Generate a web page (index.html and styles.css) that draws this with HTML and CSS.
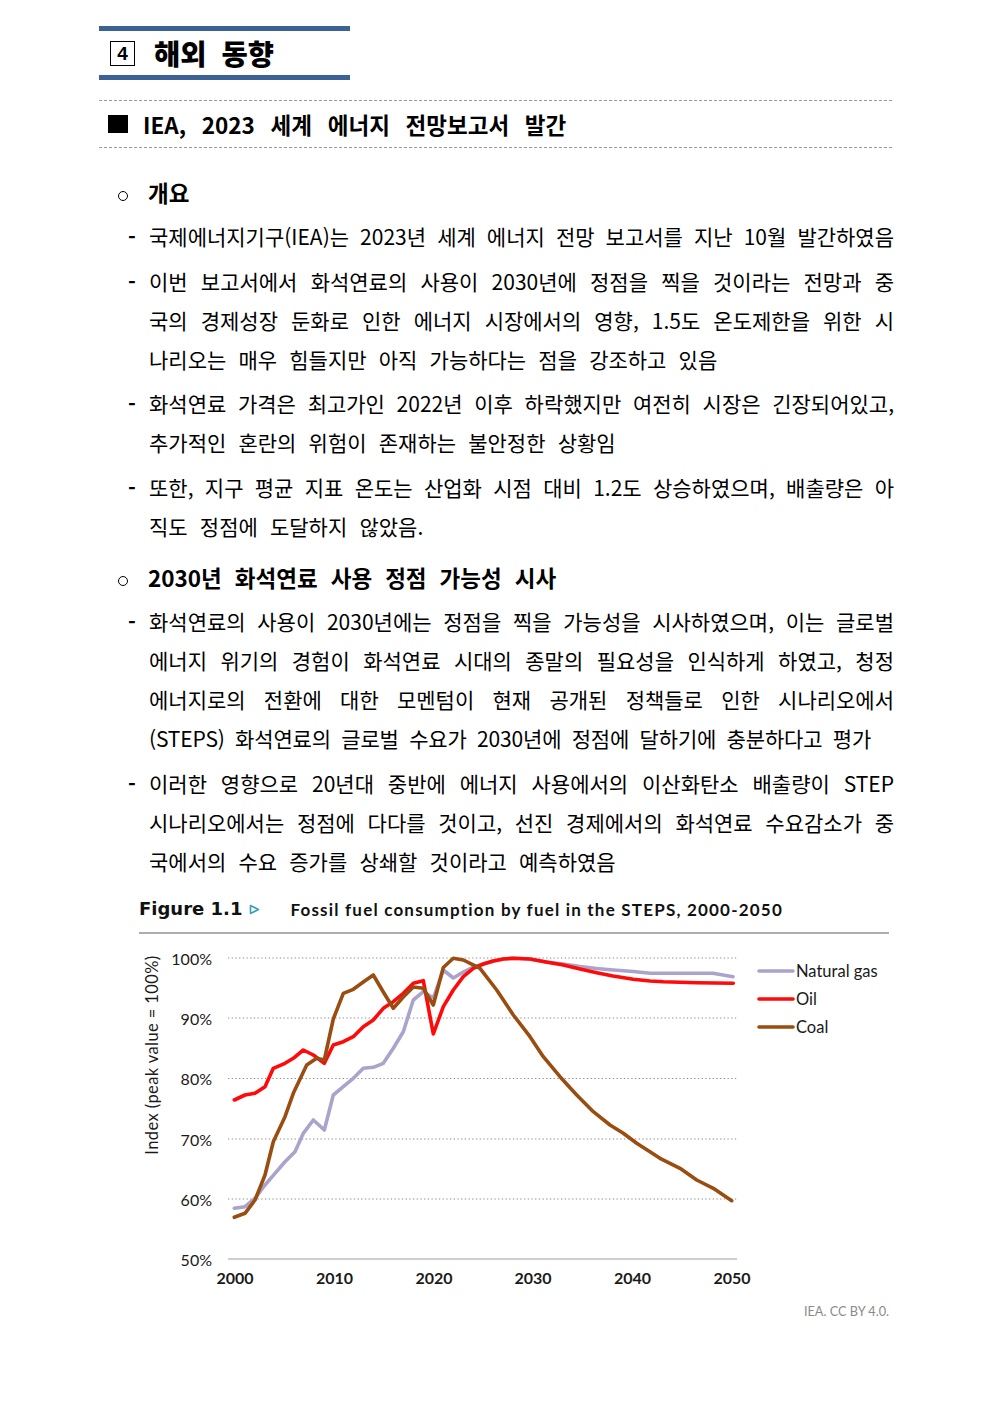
FILE: index.html
```html
<!DOCTYPE html>
<html lang="ko">
<head>
<meta charset="utf-8">
<title>해외 동향</title>
<link rel="stylesheet" href="styles.css">
</head>
<body>
<div class="page">
  <header class="chapter">
    <div class="chapter-bar"></div>
    <div class="chapter-row">
      <span class="chapter-num">4</span>
      <h1 class="chapter-title">해외 동향</h1>
    </div>
    <div class="chapter-bar"></div>
  </header>

  <div class="section-head">
    <span class="sq"></span>
    <h2>IEA, 2023 세계 에너지 전망보고서 발간</h2>
  </div>

  <div class="topic"><span class="circ"></span><h3>개요</h3></div>

  <div class="item">
    <span class="dash">-</span>
    <p class="txt"><span class="ln">국제에너지기구(IEA)는 2023년 세계 에너지 전망 보고서를 지난 10월 발간하였음</span></p>
  </div>
  <div class="item">
    <span class="dash">-</span>
    <p class="txt"><span class="ln">이번 보고서에서 화석연료의 사용이 2030년에 정점을 찍을 것이라는 전망과 중</span><span class="ln">국의 경제성장 둔화로 인한 에너지 시장에서의 영향, 1.5도 온도제한을 위한 시</span><span class="ln end">나리오는 매우 힘들지만 아직 가능하다는 점을 강조하고 있음</span></p>
  </div>
  <div class="item">
    <span class="dash">-</span>
    <p class="txt"><span class="ln">화석연료 가격은 최고가인 2022년 이후 하락했지만 여전히 시장은 긴장되어있고,</span><span class="ln end">추가적인 혼란의 위험이 존재하는 불안정한 상황임</span></p>
  </div>
  <div class="item">
    <span class="dash">-</span>
    <p class="txt"><span class="ln">또한, 지구 평균 지표 온도는 산업화 시점 대비 1.2도 상승하였으며, 배출량은 아</span><span class="ln end">직도 정점에 도달하지 않았음.</span></p>
  </div>

  <div class="topic topic-2"><span class="circ"></span><h3>2030년 화석연료 사용 정점 가능성 시사</h3></div>

  <div class="item">
    <span class="dash">-</span>
    <p class="txt"><span class="ln">화석연료의 사용이 2030년에는 정점을 찍을 가능성을 시사하였으며, 이는 글로벌</span><span class="ln">에너지 위기의 경험이 화석연료 시대의 종말의 필요성을 인식하게 하였고, 청정</span><span class="ln">에너지로의 전환에 대한 모멘텀이 현재 공개된 정책들로 인한 시나리오에서</span><span class="ln end tight">(STEPS) 화석연료의 글로벌 수요가 2030년에 정점에 달하기에 충분하다고 평가</span></p>
  </div>
  <div class="item">
    <span class="dash">-</span>
    <p class="txt"><span class="ln">이러한 영향으로 20년대 중반에 에너지 사용에서의 이산화탄소 배출량이 STEP</span><span class="ln">시나리오에서는 정점에 다다를 것이고, 선진 경제에서의 화석연료 수요감소가 중</span><span class="ln end">국에서의 수요 증가를 상쇄할 것이라고 예측하였음</span></p>
  </div>

  <figure class="figure">
    <div class="fig-title">
      <span class="fig-num">Figure 1.1</span>
      <svg class="fig-arrow" viewBox="0 0 11 11" aria-hidden="true"><polygon points="1.5,1.5 9.5,5.5 1.5,9.5" fill="none" stroke="#3a9fbf" stroke-width="1.6" stroke-linejoin="round"/></svg>
      <span class="fig-caption">Fossil fuel consumption by fuel in the STEPS, 2000-2050</span>
    </div>
    <div class="fig-rule"></div>
    <svg class="chart" width="750" height="356" viewBox="139 934 750 356">
      <g class="grid">
        <line x1="228" y1="958" x2="737" y2="958"/>
        <line x1="228" y1="1018" x2="737" y2="1018"/>
        <line x1="228" y1="1078.5" x2="737" y2="1078.5"/>
        <line x1="228" y1="1139" x2="737" y2="1139"/>
        <line x1="228" y1="1199" x2="737" y2="1199"/>
      </g>
      <line class="axis" x1="228" y1="1259" x2="737" y2="1259"/>
      <g class="ytick">
        <text x="212" y="958">100%</text>
        <text x="212" y="1018">90%</text>
        <text x="212" y="1078.5">80%</text>
        <text x="212" y="1139">70%</text>
        <text x="212" y="1199">60%</text>
        <text x="212" y="1259">50%</text>
      </g>
      <g class="xtick">
        <text x="235" y="1277">2000</text>
        <text x="334.5" y="1277">2010</text>
        <text x="434" y="1277">2020</text>
        <text x="533" y="1277">2030</text>
        <text x="632.5" y="1277">2040</text>
        <text x="732" y="1277">2050</text>
      </g>
      <text class="ytitle" x="152" y="1055" transform="rotate(-90 152 1055)">Index (peak value = 100%)</text>

      <polyline class="s-gas" points="234.3,1208.3 245,1206.7 255,1198.3 265,1185 275,1173.3 285,1161.7 295,1151.7 303.3,1133.3 313.3,1120 324.3,1130 333.3,1095 343.3,1086.7 353.3,1078.3 363.3,1068.3 373.3,1067.3 383.3,1063.3 393.3,1048.3 403.3,1031.7 413.3,1000 423.3,991.7 433.3,998 443.3,970 453.3,978 463.3,972 473.3,967 483.3,964 493.3,961 503.3,959 513.3,958.3 530,959 546,962 563.3,964 580,966.5 596.7,968.5 613,970 633.3,971.5 650,973.3 663.3,973.3 713,973.3 733,976.7"/>
      <polyline class="s-oil" points="234.3,1100 245,1095 255,1093.3 265,1086.7 273.3,1068.3 285,1063.3 293.3,1058.3 303.3,1050 313.3,1055 324.3,1063.3 333.3,1045 343.3,1041.7 353.3,1036.7 363.3,1026.7 373.3,1020 383.3,1008.3 393.3,1001.7 403.3,993.3 413.3,983.3 423.3,980.7 433.3,1034 443.3,1006.7 453.3,990 463.3,976.7 473.3,968.3 483.3,964 493.3,961 503.3,959 513.3,958.3 530,959 546,962 563.3,965 580,969 596.7,972.7 613,976 633.3,979.3 650,981 663.3,981.7 696.7,982.7 733.3,983.3"/>
      <polyline class="s-coal" points="234.3,1217.3 245,1213.3 255,1200 265,1175 273.3,1141.7 285,1116.7 293.3,1093.3 306.7,1065 316.7,1058.3 324.3,1060 333.3,1019 343.3,993.3 353.3,989.3 363.3,982 373.3,975 383.3,992 393.3,1008.3 403.3,997 413.3,987 423.3,988.3 433.3,1005 443.3,967.5 453.3,958.3 463.3,960 476.7,966.7 480,968.3 496.7,990 513.3,1015 530,1036.7 543.3,1056.7 560,1076.7 576.7,1095 593.3,1111.7 610,1125 623.3,1133.3 636.7,1143.3 660,1158.3 680,1168.3 696.7,1180 713.3,1188.3 731.7,1200.7"/>

      <g class="legend">
        <line class="s-gas" x1="759" y1="971" x2="793" y2="971"/>
        <line class="s-oil" x1="759" y1="999" x2="793" y2="999"/>
        <line class="s-coal" x1="759" y1="1027" x2="793" y2="1027"/>
        <text x="796" y="971">Natural gas</text>
        <text x="796" y="999">Oil</text>
        <text x="796" y="1027">Coal</text>
      </g>
    </svg>
    <figcaption class="fig-src">IEA. CC BY 4.0.</figcaption>
  </figure>
</div>
</body>
</html>
```

FILE: styles.css
```css
* { box-sizing: border-box; }

body {
  margin: 0;
  background: #fff;
  color: #000;
  font-family: "Noto Sans CJK KR", "Noto Sans", sans-serif;
}

.page {
  width: 796px;
  margin-left: 99px;
  padding-top: 26px;
  padding-bottom: 40px;
}

/* chapter header */
.chapter { width: 251px; }
.chapter-bar { height: 5px; background: #3b6197; }
.chapter-row {
  height: 44px;
  display: flex;
  align-items: center;
  padding-left: 11px;
}
.chapter-num {
  width: 25px;
  height: 25px;
  border: 1px solid #000;
  display: flex;
  align-items: center;
  justify-content: center;
  font: bold 19px/1 "Liberation Sans", sans-serif;
}
.chapter-title {
  margin: 0 0 0 19px;
  font-size: 28.5px;
  font-weight: 900;
  line-height: 1;
  word-spacing: 0.25em;
}

/* section head */
.section-head {
  margin-top: 20px;
  width: 793px;
  height: 48px;
  border-top: 1px dashed #9a9a9a;
  border-bottom: 1px dashed #9a9a9a;
  display: flex;
  align-items: center;
  padding-left: 9px;
}
.sq { width: 20px; height: 18px; background: #000; flex: none; }
.section-head h2 {
  margin: 0 0 0 15px;
  font-size: 22.5px;
  font-weight: 700;
  line-height: 1;
  word-spacing: 0.42em;
}

/* topics */
.topic {
  display: flex;
  align-items: center;
  height: 39px;
  padding-left: 19px;
  margin-top: 24.5px;
}
.topic-2 { margin-top: 12px; }
.circ {
  width: 10px;
  height: 10px;
  border: 1.4px solid #000;
  border-radius: 50%;
  margin-top: 8px;
  flex: none;
}
.topic h3 {
  margin: 0 0 0 20px;
  font-size: 22.5px;
  font-weight: 700;
  line-height: 39px;
  word-spacing: 0.3em;
}

/* body items */
.item {
  display: flex;
  margin-top: 5.5px;
  padding-left: 29px;
}
.dash {
  width: 21px;
  flex: none;
  font-size: 21px;
  font-weight: 700;
  line-height: 39px;
}
.txt {
  margin: 0;
  width: 745px;
  font-size: 21px;
  line-height: 39px;
}
.ln {
  display: block;
  text-align: justify;
  text-align-last: justify;
  word-spacing: 0;
}
.ln.end { text-align-last: left; word-spacing: 0.3em; }
.ln.end.tight { word-spacing: 0.22em; letter-spacing: -0.15px; }

/* figure */
.figure {
  margin: 16.5px 0 0 40px;
  width: 750px;
}
.fig-title {
  height: 24px;
  display: flex;
  align-items: center;
}
.fig-num {
  font: bold 18px/1 "DejaVu Sans", sans-serif;
  color: #111;
}
.fig-arrow { width: 11px; height: 11px; margin-left: 7px; }
.fig-caption {
  margin-left: 30px;
  font: 700 17px/1 "Lato", sans-serif;
  letter-spacing: 1.2px;
  color: #111;
}
.fig-rule {
  margin-top: 11px;
  height: 1.5px;
  background: #adadad;
}
.chart { display: block; }
.chart text { font-family: "Lato", "Liberation Sans", sans-serif; fill: #1a1a1a; dominant-baseline: central; }
.grid line { stroke: #8c8c8c; stroke-width: 1.2; stroke-dasharray: 1.3 2.4; }
.axis { stroke: #a0a0a0; stroke-width: 1.2; }
.ytick text { font-size: 16px; text-anchor: end; }
.xtick text { font-size: 16px; font-weight: 700; text-anchor: middle; }
.ytitle { font-size: 16.5px; letter-spacing: 0.4px; text-anchor: middle; }
.legend text { font-size: 16.5px; }

.s-gas, .s-oil, .s-coal {
  fill: none;
  stroke-width: 3.6;
  stroke-linejoin: round;
  stroke-linecap: round;
}
.s-gas { stroke: #aba3cb; }
.s-oil { stroke: #ff0a0a; }
.s-coal { stroke: #9a4d10; }

.fig-src {
  margin-top: 13px;
  text-align: right;
  font: 12.7px/16px "Lato", sans-serif;
  color: #8a8a8a;
}
```
